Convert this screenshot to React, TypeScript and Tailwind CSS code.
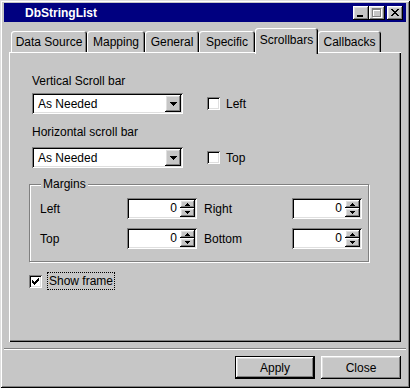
import { useState } from "react";

const raised =
  "shadow-[inset_-1px_-1px_#000,inset_1px_1px_#fff,inset_-2px_-2px_#808080,inset_2px_2px_#dfdfdf]";
const sunken =
  "shadow-[inset_1px_1px_#808080,inset_-1px_-1px_#fff,inset_2px_2px_#000,inset_-2px_-2px_#dfdfdf]";

const tabs = [
  { label: "Data Source", width: "w-[76px]" },
  { label: "Mapping", width: "w-[58px]" },
  { label: "General", width: "w-[54px]" },
  { label: "Specific", width: "w-[56px]" },
  { label: "Scrollbars", width: "w-[63px]" },
  { label: "Callbacks", width: "w-[63px]" },
];

function Checkbox({ checked, onClick }: { checked: boolean; onClick: () => void }) {
  return (
    <div
      onClick={onClick}
      className={`w-[13px] h-[13px] bg-white flex items-center justify-center shrink-0 ${sunken}`}
    >
      {checked && (
        <svg width="7" height="7" viewBox="0 0 7 7" shapeRendering="crispEdges">
          <path d="M0 2h1v1h1v1h1V3h1V2h1V1h1V0h1v3H6v1H5v1H4v1H3v1H2V6H1V5H0z" fill="#000" />
        </svg>
      )}
    </div>
  );
}

function Select({ value }: { value: string }) {
  return (
    <div className={`ml-[3px] flex items-center h-[21px] w-[151px] bg-white p-[2px] ${sunken}`}>
      <span className="flex-1 pl-[4px] leading-[14px]">{value}</span>
      <div className={`w-[16px] h-[17px] bg-[#c6c6c6] flex items-center justify-center ${raised}`}>
        <svg width="7" height="4" viewBox="0 0 7 4" shapeRendering="crispEdges">
          <path d="M0 0h7v1H6v1H5v1H4v1H3V3H2V2H1V1H0z" fill="#000" />
        </svg>
      </div>
    </div>
  );
}

function Spin({ value }: { value: number }) {
  return (
    <div className={`flex h-[21px] w-[70px] bg-white p-[2px] ${sunken}`}>
      <span className="flex-1 text-right pr-[3px] leading-[17px]">{value}</span>
      <div className="flex flex-col w-[15px]">
        <div className={`h-[8px] bg-[#c6c6c6] flex items-center justify-center ${raised}`}>
          <svg width="5" height="3" viewBox="0 0 5 3" shapeRendering="crispEdges">
            <path d="M2 0h1v1h1v1h1v1H0V2h1V1h1z" fill="#000" />
          </svg>
        </div>
        <div className={`h-[9px] bg-[#c6c6c6] flex items-center justify-center ${raised}`}>
          <svg width="5" height="3" viewBox="0 0 5 3" shapeRendering="crispEdges">
            <path d="M0 0h5v1H4v1H3v1H2V2H1V1H0z" fill="#000" />
          </svg>
        </div>
      </div>
    </div>
  );
}

export default function App() {
  const [left, setLeft] = useState(false);
  const [top, setTop] = useState(false);
  const [showFrame, setShowFrame] = useState(true);

  return (
    <div
      className={`w-[410px] h-[388px] bg-[#c6c6c6] flex flex-col pt-[3px] px-[4px] text-black text-[12px] font-['Liberation_Sans',Arial,sans-serif] shadow-[inset_1px_1px_#dfdfdf,inset_-1px_-1px_#000,inset_2px_2px_#fff,inset_-2px_-2px_#808080]`}
    >
      {/* title bar */}
      <div className="h-[19px] bg-[#000080] flex items-center pl-[21px] pr-[3px]">
        <span className="flex-1 font-bold text-white leading-[14px]">DbStringList</span>
        <div className={`w-[16px] h-[14px] bg-[#c6c6c6] flex items-end pl-[4px] pb-[3px] ${raised}`}>
          <div className="w-[6px] h-[2px] bg-black" />
        </div>
        <div className={`w-[16px] h-[14px] bg-[#c6c6c6] flex items-center justify-center ${raised}`}>
          <svg width="10" height="10" viewBox="0 0 10 10" shapeRendering="crispEdges">
            <path d="M1 1h9v9H1zM2 3v6h7V3z" fill="#fff" />
            <path d="M0 0h9v9H0zM1 2v6h7V2z" fill="#808080" />
          </svg>
        </div>
        <div className={`ml-[2px] w-[16px] h-[14px] bg-[#c6c6c6] flex items-center justify-center ${raised}`}>
          <svg width="8" height="7" viewBox="0 0 8 7" shapeRendering="crispEdges">
            <path d="M0 0h2v1h1v1h2V1h1V0h2v1H7v1H6v1H5v1h1v1h1v1h1v1H6V6H5V5H3v1H2v1H0V6h1V5h1V4h1V3H2V2H1V1H0z" fill="#000" />
          </svg>
        </div>
      </div>

      {/* tabs */}
      <div className="mt-[6px] mx-[5px] h-[24px] flex items-end pl-[2px]">
        {tabs.map((tab) =>
          tab.label === "Scrollbars" ? (
            <div
              key={tab.label}
              className={`relative z-10 ${tab.width} h-[26px] -mb-[2px] bg-[#c6c6c6] rounded-t-[3px] flex items-center justify-center pb-[3px] shadow-[inset_1px_1px_#fff,inset_-1px_0_#000,inset_-2px_0_#808080]`}
            >
              {tab.label}
            </div>
          ) : (
            <div
              key={tab.label}
              className={`${tab.width} h-[21px] bg-[#c6c6c6] rounded-t-[3px] flex items-center justify-center shadow-[inset_1px_1px_#fff,inset_-1px_0_#000,inset_-2px_0_#808080]`}
            >
              {tab.label}
            </div>
          )
        )}
      </div>

      {/* tab page */}
      <div className="mx-[5px] h-[290px] flex flex-col pt-[22px] pl-[20px] shadow-[inset_1px_1px_#fff,inset_-1px_-1px_#000,inset_-2px_-2px_#808080]">
        <div className="ml-[3px] leading-[14px]">Vertical Scroll bar</div>
        <div className="mt-[5px] flex items-center">
          <Select value="As Needed" />
          <div className="ml-[24px] flex items-center gap-[6px]">
            <Checkbox checked={left} onClick={() => setLeft(!left)} />
            <span className="leading-[14px]">Left</span>
          </div>
        </div>

        <div className="mt-[11px] ml-[3px] leading-[14px]">Horizontal scroll bar</div>
        <div className="mt-[8px] flex items-center">
          <Select value="As Needed" />
          <div className="ml-[24px] flex items-center gap-[6px]">
            <Checkbox checked={top} onClick={() => setTop(!top)} />
            <span className="leading-[14px]">Top</span>
          </div>
        </div>

        {/* margins group */}
        <div className="relative mt-[16px] w-[340px] border border-[#808080] shadow-[inset_1px_1px_#fff,1px_1px_#fff] pt-[13px] pb-[12px] pl-[10px] flex flex-col gap-[9px]">
          <span className="absolute -top-[8px] left-[11px] px-[2px] bg-[#c6c6c6] leading-[14px]">
            Margins
          </span>
          <div className="flex items-center">
            <span className="w-[87px]">Left</span>
            <Spin value={0} />
            <span className="ml-[7px] w-[88px]">Right</span>
            <Spin value={0} />
          </div>
          <div className="flex items-center">
            <span className="w-[87px]">Top</span>
            <Spin value={0} />
            <span className="ml-[7px] w-[88px]">Bottom</span>
            <Spin value={0} />
          </div>
        </div>

        <div className="mt-[10px] flex items-center gap-[5px]">
          <Checkbox checked={showFrame} onClick={() => setShowFrame(!showFrame)} />
          <span className="h-[18px] px-[1px] flex items-center border border-dotted border-black leading-[14px]">
            Show frame
          </span>
        </div>
      </div>

      {/* separator */}
      <div className="mt-[6px] h-[2px] border-t border-[#808080] border-b border-b-white" />

      {/* buttons */}
      <div className="mt-[6px] mr-[5px] flex justify-end gap-[6px]">
        <button className={`w-[80px] h-[23px] bg-[#c6c6c6] border border-black flex items-center justify-center ${raised}`}>
          Apply
        </button>
        <button className={`w-[80px] h-[23px] bg-[#c6c6c6] flex items-center justify-center ${raised}`}>
          Close
        </button>
      </div>
    </div>
  );
}
